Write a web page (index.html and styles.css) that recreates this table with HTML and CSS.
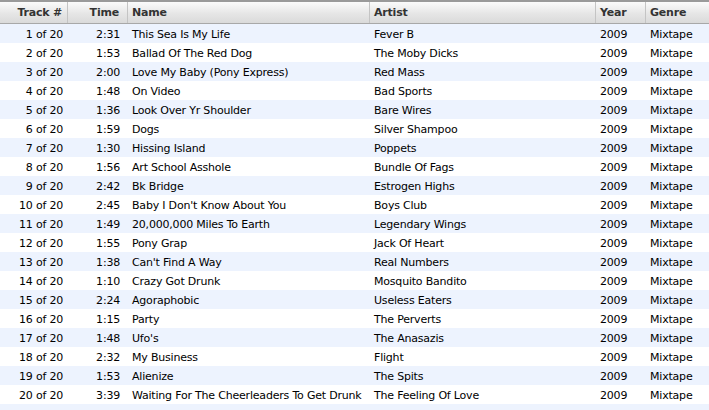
FILE: index.html
```html
<!DOCTYPE html>
<html lang="en">
  <head>
    <meta charset="UTF-8" />
    <title>Mixtape 2009</title>
    <link rel="stylesheet" href="styles.css">
  </head>
  <body>
    <div class="list">
      <div class="row head">
        <div class="c track">Track #</div>
        <div class="c time">Time</div>
        <div class="c name">Name</div>
        <div class="c artist">Artist</div>
        <div class="c year">Year</div>
        <div class="c genre">Genre</div>
      </div>
      <div id="rows"></div>
      <div class="row filler"></div>
    </div>

    <script>
      // track data: time, name, artist
      const tracks = [
        ["2:31", "This Sea Is My Life", "Fever B"],
        ["1:53", "Ballad Of The Red Dog", "The Moby Dicks"],
        ["2:00", "Love My Baby (Pony Express)", "Red Mass"],
        ["1:48", "On Video", "Bad Sports"],
        ["1:36", "Look Over Yr Shoulder", "Bare Wires"],
        ["1:59", "Dogs", "Silver Shampoo"],
        ["1:30", "Hissing Island", "Poppets"],
        ["1:56", "Art School Asshole", "Bundle Of Fags"],
        ["2:42", "Bk Bridge", "Estrogen Highs"],
        ["2:45", "Baby I Don't Know About You", "Boys Club"],
        ["1:49", "20,000,000 Miles To Earth", "Legendary Wings"],
        ["1:55", "Pony Grap", "Jack Of Heart"],
        ["1:38", "Can't Find A Way", "Real Numbers"],
        ["1:10", "Crazy Got Drunk", "Mosquito Bandito"],
        ["2:24", "Agoraphobic", "Useless Eaters"],
        ["1:15", "Party", "The Perverts"],
        ["1:48", "Ufo's", "The Anasazis"],
        ["2:32", "My Business", "Flight"],
        ["1:53", "Alienize", "The Spits"],
        ["3:39", "Waiting For The Cheerleaders To Get Drunk", "The Feeling Of Love"]
      ];

      const rows = document.getElementById("rows");
      tracks.forEach((t, i) => {
        const r = document.createElement("div");
        r.className = "row";
        r.innerHTML =
          `<div class="c track">${i + 1} of ${tracks.length}</div>` +
          `<div class="c time">${t[0]}</div>` +
          `<div class="c name">${t[1]}</div>` +
          `<div class="c artist">${t[2]}</div>` +
          `<div class="c year">2009</div>` +
          `<div class="c genre">Mixtape</div>`;
        rows.appendChild(r);
      });
    </script>
  </body>
</html>
```

FILE: styles.css
```css
body {
  margin: 0;
  background: #fff;
  font-family: "DejaVu Sans", Verdana, sans-serif;
  font-size: 11px;
  letter-spacing: -0.2px;
  color: #000;
  overflow: hidden;
}
.list {
  width: 709px;
}
.row {
  display: grid;
  grid-template-columns: 68px 60px 242px 226px 50px 63px;
  height: 19px;
  line-height: 19px;
  align-items: center;
}
#rows .row:nth-child(odd),
.filler {
  background: #edf3fe;
}
.filler {
  height: 6px;
}
.c {
  padding: 0 5px 0 4px;
  white-space: nowrap;
  overflow: hidden;
}
#rows .c {
  padding-top: 1px;
}
.track,
.time {
  text-align: right;
}
.time {
  padding-right: 8px;
}
.head {
  height: 21px;
  border-top: 2px solid #9a9a9a;
  border-bottom: 1px solid #a8a8a8;
  background: linear-gradient(#fbfbfb, #e6e6e6 55%, #dadada);
  font-weight: bold;
  color: #333;
}
.head .c {
  height: 21px;
  line-height: 21px;
  border-right: 1px solid #c4c4c4;
}
.head .genre {
  border-right: none;
}
```
